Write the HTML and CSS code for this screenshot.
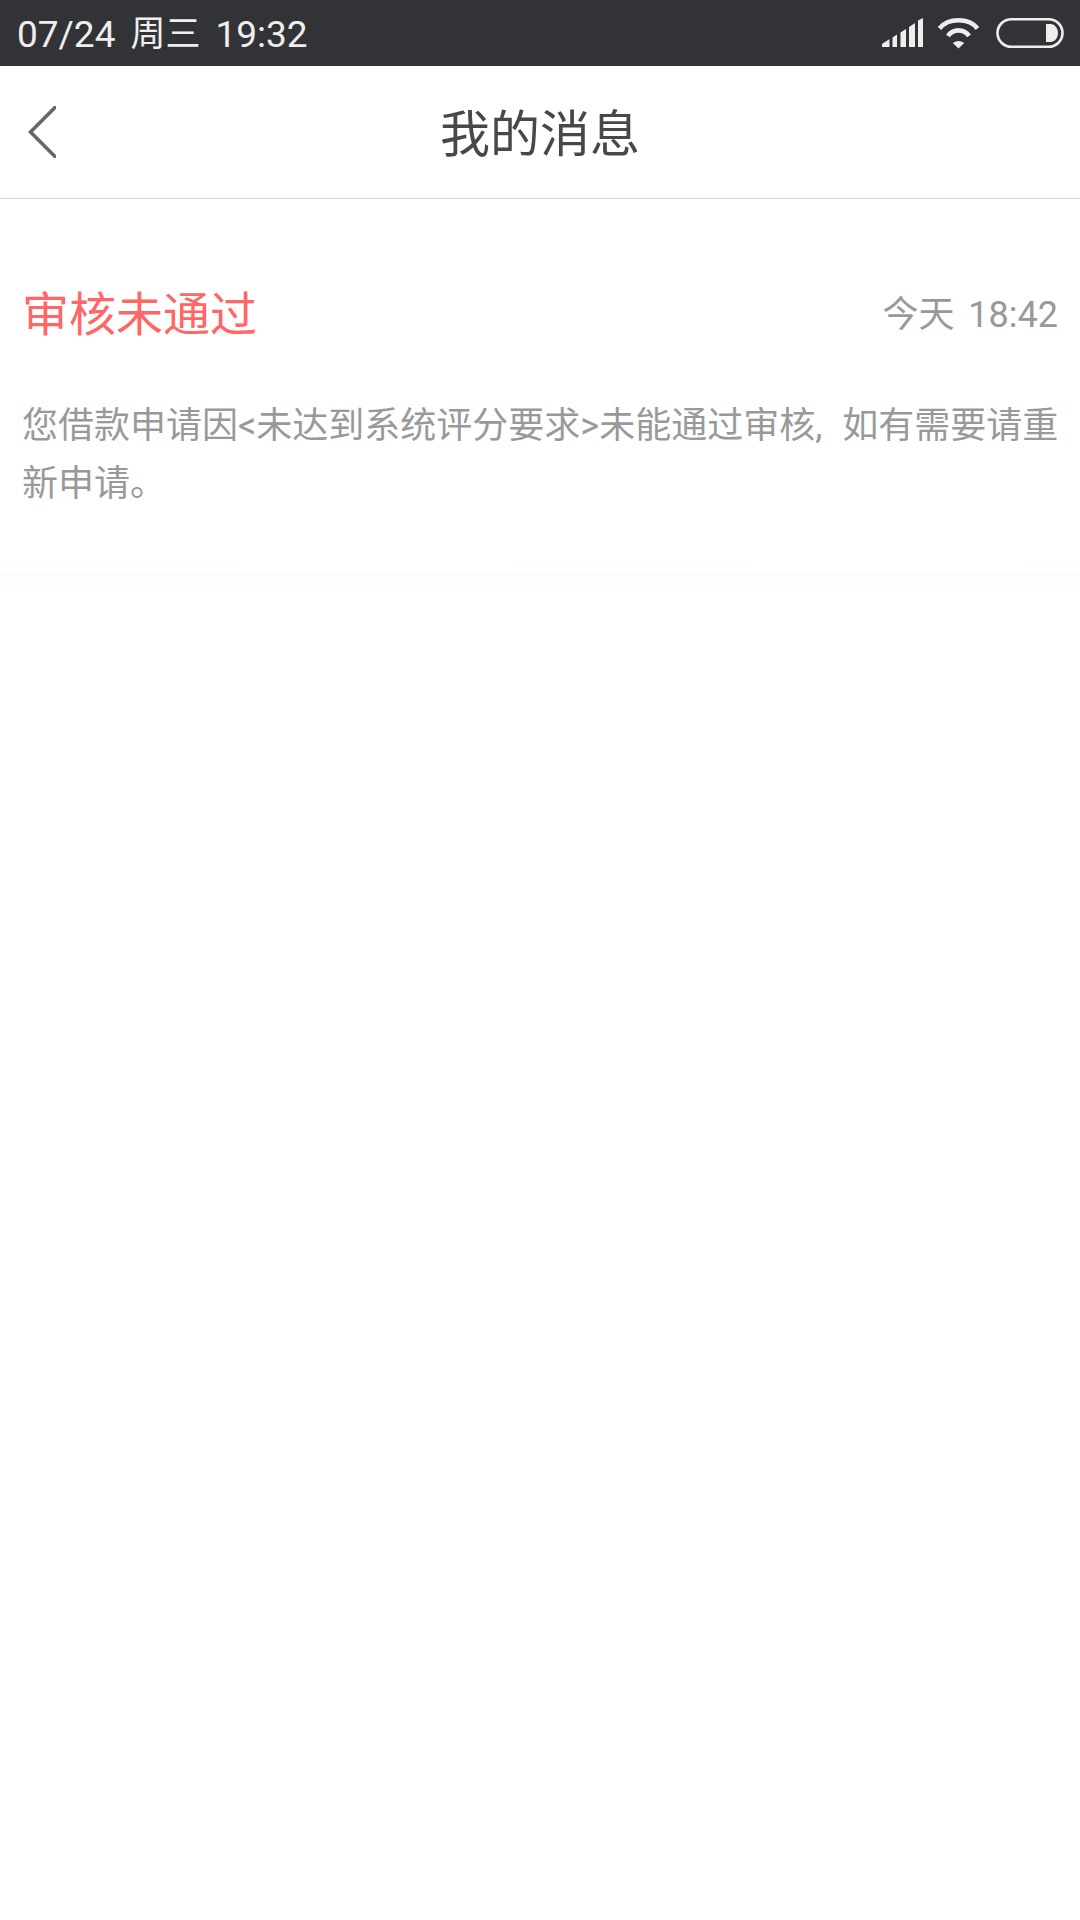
FILE: index.html
```html
<!DOCTYPE html>
<html lang="zh-CN">
<head>
    <meta charset="UTF-8">
    <meta name="viewport" content="width=device-width, initial-scale=1.0">
    <title>我的消息</title>
    <link rel="stylesheet" href="styles.css">
</head>
<body>
    <!-- Status bar -->
    <div class="status-bar">
        <div class="status-time">
            <span>07/24</span>
            <span class="status-day">周三</span>
            <span>19:32</span>
        </div>
        <div class="status-icons">
            <svg class="icon-signal" width="42" height="32" viewBox="0 0 42 32">
                <path d="M0 30V27L7.500 22V30Z M10.500 30V20.500L15 17.500V30Z M18.500 30V15.500L24 12V30Z M27 30V10L33 6V30Z M36 30V3.500L41 1V30Z" fill="#eeeeee"/>
            </svg>
            <svg class="icon-wifi" width="45" height="32" viewBox="0 0 45 32">
                <path d="M3.500 11.500C12 0.500 33 0.500 41.500 11.500" fill="none" stroke="#eeeeee" stroke-width="4.600"/>
                <path d="M12 19C17 11.500 28 11.500 33 19" fill="none" stroke="#eeeeee" stroke-width="4.600"/>
                <path d="M22.500 31.500L16.800 26Q22.500 22 28.200 26Z" fill="#eeeeee"/>
            </svg>
            <svg class="icon-battery" width="70" height="32" viewBox="0 0 70 32">
                <rect x="2.500" y="2.200" width="65" height="27.600" rx="13.800" fill="none" stroke="#eeeeee" stroke-width="2.600"/>
                <path d="M51 7H55.500C59.500 7 63 11 63 16C63 21 59.500 25 55.500 25H51Z" fill="#eeeeee"/>
            </svg>
        </div>
    </div>

    <!-- Header -->
    <div class="header">
        <svg class="back-icon" width="28" height="52" viewBox="0 0 28 52">
            <path d="M30 -1.500L2.500 26L30 53.500" fill="none" stroke="#666666" stroke-width="3.600"/>
        </svg>
        <h1 class="header-title">我的消息</h1>
    </div>

    <!-- Message -->
    <div class="message">
        <div class="message-top">
            <div class="message-title">审核未通过</div>
            <div class="message-date">今天&nbsp; 18:42</div>
        </div>
        <p class="message-text">您借款申请因&lt;未达到系统评分要求&gt;未能通过审核, 如有需要请重新申请。</p>
    </div>
    <div class="message-shadow"></div>
</body>
</html>
```

FILE: styles.css
```css
body {
    font-family: 'Roboto', 'Noto Sans CJK SC', sans-serif;
    background-color: #fff;
    margin: 0;
}

.status-bar {
    height: 66px;
    background-color: #323337;
    display: flex;
    justify-content: space-between;
    align-items: center;
    padding: 0 15px 0 17px;
}

.status-time {
    display: flex;
    align-items: center;
    gap: 15px;
    color: #eeeeee;
    font-size: 37px;
    line-height: 64px;
    margin-top: 4px;
    white-space: nowrap;
}

.status-day {
    font-size: 35px;
}

.status-icons {
    display: flex;
    align-items: center;
}

.icon-signal {
    margin-right: 12px;
}

.icon-wifi {
    margin-right: 14px;
}

.header {
    position: relative;
    height: 132px;
    border-bottom: 1px solid #d4d4d4;
    display: flex;
    justify-content: center;
    align-items: center;
}

.back-icon {
    position: absolute;
    left: 28px;
    top: 40px;
}

.header-title {
    margin: -4px 0 0 0;
    color: #484848;
    font-size: 50px;
    font-weight: normal;
}

.message {
    padding: 84px 22px 55px 22px;
}

.message-top {
    display: flex;
    justify-content: space-between;
    align-items: center;
}

.message-title {
    color: #ff6666;
    font-size: 47px;
    line-height: 64px;
}

.message-date {
    color: #999;
    font-size: 36px;
    line-height: 64px;
    word-spacing: -2px;
}

.message-text {
    margin: 50px -2px 0 0;
    color: #999;
    font-size: 36px;
    line-height: 58px;
    word-spacing: 11px;
}

.message-shadow {
    height: 20px;
    background: linear-gradient(to bottom, #fff, #fbfcfe 50%, #fff);
}
```
